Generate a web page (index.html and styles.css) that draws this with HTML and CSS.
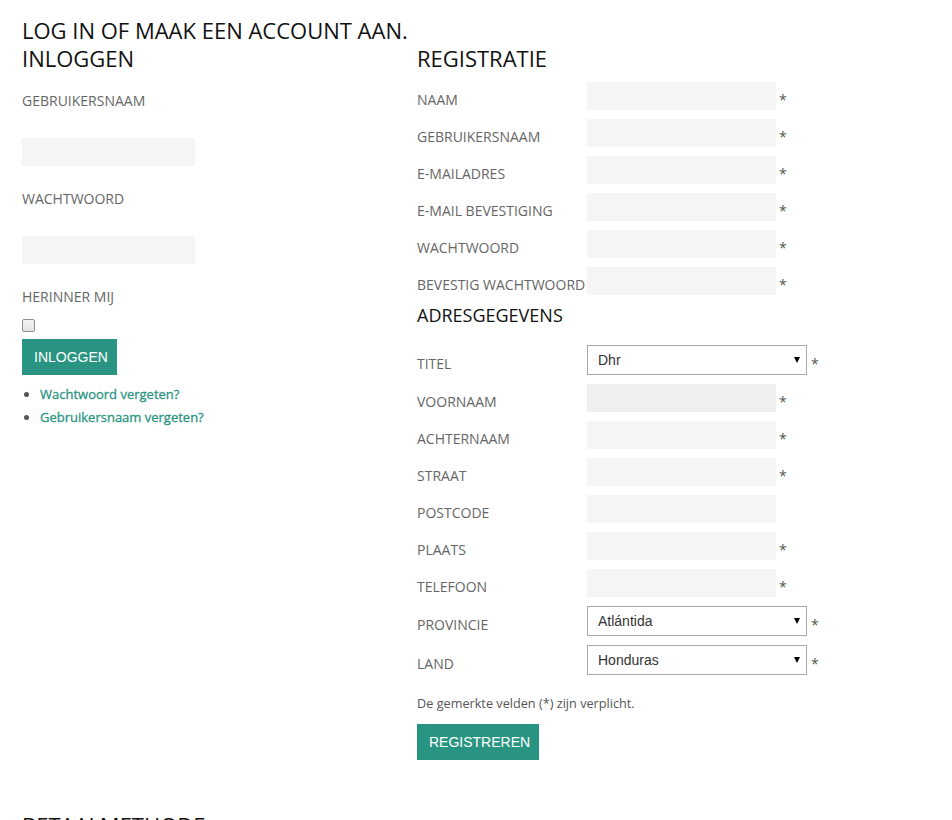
FILE: index.html
```html
<!DOCTYPE html>
<html lang="nl">
<head>
<meta charset="utf-8">
<title>Log in of maak een account aan</title>
<link rel="stylesheet" href="styles.css">
</head>
<body>
<div class="page">
  <h1 class="page-title">LOG IN OF MAAK EEN ACCOUNT AAN.</h1>
  <div class="cols">
    <section class="login">
      <h2 class="col-title">INLOGGEN</h2>
      <div class="login-field first">
        <label class="login-label">GEBRUIKERSNAAM</label>
        <input class="text-input login-input" type="text">
      </div>
      <div class="login-field">
        <label class="login-label">WACHTWOORD</label>
        <input class="text-input login-input" type="password">
      </div>
      <div class="login-field remember">
        <label class="login-label">HERINNER MIJ</label>
        <input class="checkbox" type="checkbox">
      </div>
      <button class="btn btn-login" type="button">INLOGGEN</button>
      <ul class="links">
        <li><a href="#">Wachtwoord vergeten?</a></li>
        <li><a href="#">Gebruikersnaam vergeten?</a></li>
      </ul>
    </section>

    <section class="register">
      <h2 class="col-title reg-title">REGISTRATIE</h2>
      <div class="rows">
        <div class="row"><label class="row-label">NAAM</label><input class="text-input row-input" type="text"><span class="req">*</span></div>
        <div class="row"><label class="row-label">GEBRUIKERSNAAM</label><input class="text-input row-input" type="text"><span class="req">*</span></div>
        <div class="row"><label class="row-label">E-MAILADRES</label><input class="text-input row-input" type="text"><span class="req">*</span></div>
        <div class="row"><label class="row-label">E-MAIL BEVESTIGING</label><input class="text-input row-input" type="text"><span class="req">*</span></div>
        <div class="row"><label class="row-label">WACHTWOORD</label><input class="text-input row-input" type="password"><span class="req">*</span></div>
        <div class="row"><label class="row-label">BEVESTIG WACHTWOORD</label><input class="text-input row-input" type="password"><span class="req">*</span></div>

        <h3 class="sub-title">ADRESGEGEVENS</h3>

        <div class="row select-row"><label class="row-label">TITEL</label>
          <div class="select-wrap"><select class="select"><option>Dhr</option><option>Mevr</option></select><span class="select-arrow"></span></div>
          <span class="req req-select">*</span></div>
        <div class="row"><label class="row-label">VOORNAAM</label><input class="text-input row-input active" type="text"><span class="req">*</span></div>
        <div class="row"><label class="row-label">ACHTERNAAM</label><input class="text-input row-input" type="text"><span class="req">*</span></div>
        <div class="row"><label class="row-label">STRAAT</label><input class="text-input row-input" type="text"><span class="req">*</span></div>
        <div class="row"><label class="row-label">POSTCODE</label><input class="text-input row-input" type="text"></div>
        <div class="row"><label class="row-label">PLAATS</label><input class="text-input row-input" type="text"><span class="req">*</span></div>
        <div class="row"><label class="row-label">TELEFOON</label><input class="text-input row-input" type="text"><span class="req">*</span></div>
        <div class="row select-row"><label class="row-label">PROVINCIE</label>
          <div class="select-wrap"><select class="select"><option>Atlántida</option></select><span class="select-arrow"></span></div>
          <span class="req req-select">*</span></div>
        <div class="row select-row"><label class="row-label">LAND</label>
          <div class="select-wrap"><select class="select"><option>Honduras</option></select><span class="select-arrow"></span></div>
          <span class="req req-select">*</span></div>
      </div>
      <p class="note">De gemerkte velden (*) zijn verplicht.</p>
      <button class="btn btn-register" type="button">REGISTREREN</button>
    </section>
  </div>
  <h2 class="col-title next-title">BETAALMETHODE</h2>
</div>
</body>
</html>
```
FILE: styles.css
```css
html, body {
  margin: 0;
  padding: 0;
  background: #fff;
}
body {
  font-family: "Open Sans", "Liberation Sans", sans-serif;
  color: #666;
  overflow: hidden;
  height: 820px;
}
.page {
  padding: 16px 22px 0 22px;
}
.page-title {
  margin: 0;
  font-size: 22px;
  line-height: 28px;
  font-weight: 400;
  color: #111;
}
.cols {
  display: grid;
  grid-template-columns: 395px 1fr;
}
.col-title {
  margin: 0;
  font-size: 22px;
  line-height: 28px;
  font-weight: 400;
  color: #111;
}
.login-field {
  display: flex;
  flex-direction: column;
  align-items: flex-start;
  margin-top: 23px;
}
.login-field.first {
  margin-top: 19px;
}
.login-label {
  font-size: 14px;
  line-height: 20px;
  margin-bottom: 27px;
}
.login-field.remember .login-label {
  margin-bottom: 12px;
}
.text-input {
  box-sizing: border-box;
  height: 28px;
  border: 0;
  margin: 0;
  padding: 0 8px;
  background: #f5f5f5;
  font-family: inherit;
  font-size: 14px;
  outline: none;
}
.text-input.active {
  background: #efefef;
}
.login-input {
  width: 173px;
}
.checkbox {
  -webkit-appearance: none;
  appearance: none;
  box-sizing: border-box;
  width: 13px;
  height: 13px;
  margin: 0;
  border: 1px solid #8f8f8f;
  border-radius: 2px;
  background: linear-gradient(#f4f4f4, #e2e2e2);
}
.btn {
  display: block;
  box-sizing: border-box;
  height: 36px;
  border: 0;
  margin: 0;
  padding: 0 12px;
  background: #2a9482;
  color: #fff;
  font-family: "Liberation Sans", Arial, sans-serif;
  font-size: 14px;
  cursor: pointer;
}
.btn-login {
  margin-top: 7px;
  width: 95px;
}
.links {
  margin: 8px 0 0 0;
  padding: 0 0 0 18px;
  color: #555;
  font-size: 13px;
  line-height: 23px;
}
.links a {
  color: #2a9482;
  font-weight: 400;
  -webkit-text-stroke: 0.3px #2a9482;
  text-decoration: none;
}
.reg-title {
  margin-bottom: 10px;
}
.rows {
  display: flex;
  flex-direction: column;
  gap: 9px;
}
.row {
  display: flex;
  align-items: flex-start;
}
.row-label {
  flex: 0 0 170px;
  white-space: nowrap;
  font-size: 14px;
  line-height: 20px;
  padding-top: 8px;
}
.row-input {
  width: 189px;
}
.req {
  font-size: 14px;
  line-height: 20px;
  padding-top: 8px;
  margin-left: 3px;
  color: #555;
}
.select-row .row-label,
.select-row .req {
  padding-top: 9px;
}
.req-select {
  margin-left: 4px;
}
.sub-title {
  margin: 0 0 10px 0;
  font-size: 18px;
  line-height: 22px;
  font-weight: 400;
  color: #111;
}
.select-wrap {
  position: relative;
  width: 220px;
  height: 30px;
}
.select {
  -webkit-appearance: none;
  appearance: none;
  box-sizing: border-box;
  width: 220px;
  height: 30px;
  margin: 0;
  padding: 0 0 0 10px;
  border: 1px solid #a9a9a9;
  border-radius: 0;
  background: #fff;
  color: #333;
  font-family: "Liberation Sans", Arial, sans-serif;
  font-size: 14px;
  outline: none;
}
.select-arrow {
  position: absolute;
  right: 7px;
  top: 12px;
  width: 0;
  height: 0;
  border-left: 3px solid transparent;
  border-right: 3px solid transparent;
  border-top: 6px solid #000;
  pointer-events: none;
}
.note {
  margin: 19px 0 0 0;
  font-size: 12.7px;
  line-height: 18px;
  color: #555;
}
.btn-register {
  margin-top: 12px;
  width: 122px;
}
.next-title {
  margin-top: 51px;
}
```
